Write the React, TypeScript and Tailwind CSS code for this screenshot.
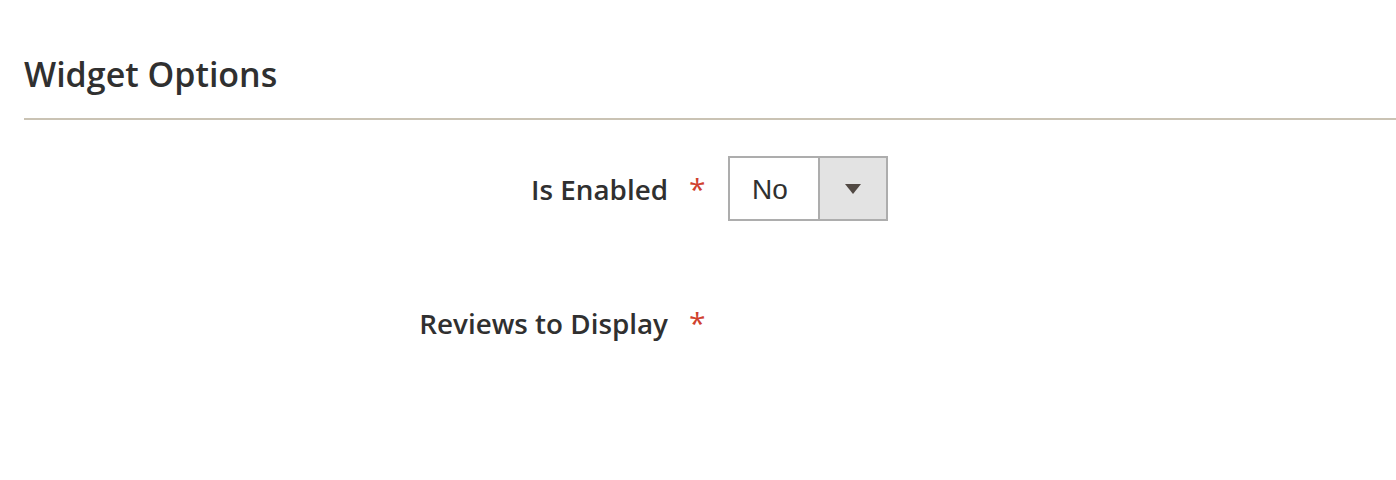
export default function App() {
  return (
    <div className="w-[1396px] h-[480px] bg-white pl-6 pt-[52px] font-['Open_Sans',sans-serif] text-[#303030]">
      {/* TITLE */}
      <div className="border-b-2 border-[#cac3b4] pb-[22px]">
        <h2 className="text-[34px] leading-[44px] font-semibold">Widget Options</h2>
      </div>

      {/* FIELDS */}
      <div className="mt-9 flex flex-col gap-[69px]">
        <div className="flex items-center h-[65px]">
          <label className="w-[644px] text-right text-[27.8px] leading-[40px] font-semibold">Is Enabled</label>
          <span className="w-[60px] pl-[21px] text-[30px] leading-[40px] text-[#d0412e]">*</span>
          <div className="flex h-[65px] w-[160px] border-2 border-[#adadad] bg-white">
            <div className="flex-1 flex items-center pl-[22px] pt-[2px] text-[28px] font-['Liberation_Sans',sans-serif] text-[#303030]">
              No
            </div>
            <div className="w-[68px] flex items-center justify-center border-l-2 border-[#adadad] bg-[#e3e3e3]">
              <svg width="16" height="10" viewBox="0 0 16 10">
                <path d="M0 0 L16 0 L8 10 Z" fill="#514943" />
              </svg>
            </div>
          </div>
        </div>

        <div className="flex items-center h-[65px]">
          <label className="w-[644px] text-right text-[27.8px] leading-[40px] font-semibold">Reviews to Display</label>
          <span className="w-[60px] pl-[21px] text-[30px] leading-[40px] text-[#d0412e]">*</span>
        </div>
      </div>
    </div>
  );
}
